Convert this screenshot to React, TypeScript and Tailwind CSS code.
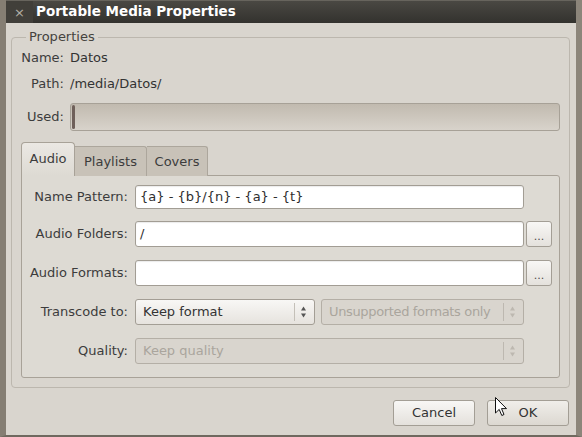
import React from "react";

const Spin = ({ disabled }: { disabled?: boolean }) => (
  <svg width="7" height="14" viewBox="0 0 7 14" className="shrink-0">
    <path d="M3.5 1.5 L6 5.5 L1 5.5 Z" fill={disabled ? "#bdb8b0" : "#555"} />
    <path d="M3.5 12.5 L6 8.5 L1 8.5 Z" fill={disabled ? "#bdb8b0" : "#555"} />
  </svg>
);

const Entry = ({ value, h = "h-[26px]" }: { value?: string; h?: string }) => (
  <div
    className={`${h} w-[389px] bg-white border border-[#a29d94] rounded-[3px] px-[4px] flex items-center text-[#2e2e2e] shadow-[inset_0_1px_1px_rgba(0,0,0,0.08)]`}
  >
    {value}
  </div>
);

const DotsButton = () => (
  <button className="ml-[2px] w-[26px] h-[26px] border border-[#a39e95] rounded-[3px] bg-gradient-to-b from-[#f8f7f5] to-[#e4e1dc] flex items-center justify-center text-[11px] leading-none text-[#4b4b4b] pt-[4px]">
    ...
  </button>
);

const Combo = ({
  label,
  width,
  disabled,
  tight,
}: {
  label: string;
  width: string;
  disabled?: boolean;
  tight?: boolean;
}) => (
  <div
    className={`${width} h-[26px] rounded-[3px] border flex items-center pl-[7px] pr-[7px] ${
      disabled
        ? "border-[#b4afa6] bg-[#d9d5ce] text-[#aaa59d]"
        : "border-[#a39e95] bg-gradient-to-b from-[#f8f7f5] to-[#e6e3de] text-[#333]"
    }`}
  >
    <span className={`flex-1 whitespace-nowrap overflow-hidden ${tight ? "tracking-[-0.35px]" : ""}`}>{label}</span>
    <span className={`w-px h-[18px] mx-[5px] ${disabled ? "bg-[#bdb8b0]" : "bg-[#c4c0b8]"}`} />
    <Spin disabled={disabled} />
  </div>
);

const Row = ({ label, children, className = "" }: { label: string; children: React.ReactNode; className?: string }) => (
  <div className={`flex items-center h-[26px] ${className}`}>
    <div className="w-[99px] mr-[7px] text-right text-[#3c3c3c]">{label}</div>
    {children}
  </div>
);

export default function App() {
  return (
    <div className="w-[582px] h-[437px] relative font-['DejaVu_Sans','Liberation_Sans',sans-serif] text-[13px] text-[#3c3c3c] bg-[#d9d5ce] flex flex-col overflow-hidden border-l-[6px] border-r-[6px] border-b-[2px] border-l-[#857e73] border-r-[#8c857a] border-b-[#6f695f]">
      {/* title bar */}
      <div className="h-[23px] bg-gradient-to-b from-[#4a4843] to-[#33322e] flex items-center shrink-0 border-t border-[#67645d]">
        <div className="w-[27px] h-[22px] bg-[#413f3a] flex items-center justify-center text-[#b3afa7] text-[13px] leading-none">
          ×
        </div>
        <div className="ml-[3px] text-white font-bold text-[13.5px] leading-none">Portable Media Properties</div>
      </div>

      <div className="flex-1 flex flex-col pt-[6px] pl-[5px] pr-[6px]">
        <fieldset className="border border-[#bcb7ae] rounded-[4px] px-[9px] pb-[9px] pt-0">
          <legend className="ml-[5px] px-[3px] text-[#45433e] leading-[16px]">Properties</legend>
          <div className="flex flex-col">
            <div className="flex items-center h-[24px] mt-[1px]">
              <div className="w-[43px] text-right">Name:</div>
              <div className="ml-[6px] text-[#333]">Datos</div>
            </div>
            <div className="flex items-center h-[24px] mt-[2px]">
              <div className="w-[43px] text-right">Path:</div>
              <div className="ml-[6px] text-[#333]">/media/Datos/</div>
            </div>
            <div className="flex items-center h-[28px] mt-[7px]">
              <div className="w-[43px] text-right">Used:</div>
              <div className="ml-[6px] flex-1 h-[28px] rounded-[3px] border border-[#a7a197] bg-gradient-to-b from-[#c1baaf] to-[#d8d3cb] flex items-stretch p-[1px]">
                <div className="w-[3px] rounded-[2px] bg-[#6f605a]" />
              </div>
            </div>

            {/* notebook */}
            <div className="mt-[11px] flex items-end h-[34px] relative z-10">
              <div className="w-[54px] h-[34px] border border-[#a8a298] border-b-0 rounded-t-[4px] bg-gradient-to-b from-[#ebe8e3] to-[#dddad3] flex items-center justify-center pb-[1px]">
                Audio
              </div>
              <div className="w-[72px] h-[30px] border border-[#aca69c] border-b-0 border-l-0 rounded-tr-[3px] bg-[#c8c2b8] flex items-center justify-center">
                Playlists
              </div>
              <div className="w-[61px] h-[30px] border border-[#aca69c] border-b-0 border-l-0 rounded-tr-[3px] bg-[#c8c2b8] flex items-center justify-center">
                Covers
              </div>
            </div>
            <div className="-mt-px border border-[#a8a298] rounded-b-[3px] rounded-tr-[3px] bg-[#dddad3] pt-[8px] pb-[13px] pl-[7px]">
              <Row label="Name Pattern:">
                <Entry value="{a} - {b}/{n} - {a} - {t}" h="h-[24px]" />
              </Row>
              <Row label="Audio Folders:" className="mt-[11px]">
                <Entry value="/" />
                <DotsButton />
              </Row>
              <Row label="Audio Formats:" className="mt-[13px]">
                <Entry />
                <DotsButton />
              </Row>
              <Row label="Transcode to:" className="mt-[13px]">
                <Combo label="Keep format" width="w-[180px]" />
                <div className="w-[6px]" />
                <Combo label="Unsupported formats only" width="w-[203px]" disabled tight />
              </Row>
              <Row label="Quality:" className="mt-[13px]">
                <Combo label="Keep quality" width="w-[389px]" disabled />
              </Row>
            </div>
          </div>
        </fieldset>

        <div className="mt-[12px] flex justify-end gap-[12px] pr-[1px]">
          <button className="w-[82px] h-[26px] rounded-[3px] border border-[#a39e95] bg-gradient-to-b from-[#f8f7f5] to-[#e4e1dc] text-[#333]">
            Cancel
          </button>
          <button className="w-[82px] h-[26px] rounded-[3px] border border-[#a39e95] bg-gradient-to-b from-[#f0eeea] to-[#dcd8d1] text-[#333]">
            OK
          </button>
        </div>
      </div>

      {/* mouse pointer */}
      <svg className="absolute left-[489px] top-[397px]" width="13" height="20" viewBox="0 0 13 20">
        <path d="M0.5 0.5 L0.5 16 L4.2 12.4 L6.8 18.5 L9 17.5 L6.5 11.6 L11.5 11.6 Z" fill="#fff" stroke="#111" strokeWidth="1" strokeLinejoin="miter" />
      </svg>
    </div>
  );
}
